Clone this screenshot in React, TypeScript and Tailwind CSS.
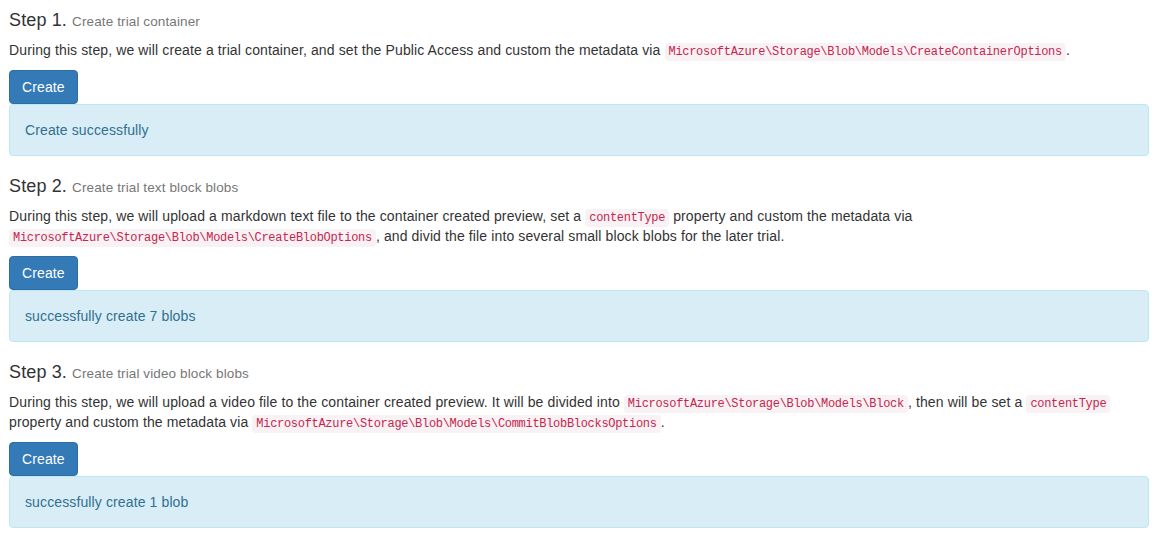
const Code = ({ children }: { children: React.ReactNode }) => (
  <code className="font-['Liberation_Mono',monospace] text-[12px] leading-none tracking-[-0.3px] text-[#c7254e] bg-[#f9f2f4] px-[4px] py-[2px] rounded-[4px]">
    {children}
  </code>
);

const Step = ({
  n,
  title,
  children,
  result,
}: {
  n: number;
  title: string;
  children: React.ReactNode;
  result: string;
}) => (
  <div>
    <h4 className="text-[18px] leading-[20px] font-normal mt-[10px] mb-[10px] text-[#333]">
      Step {n}. <small className="text-[13.5px] leading-none text-[#777]">{title}</small>
    </h4>
    <p className="mb-[10px] leading-[20px]">{children}</p>
    <button className="bg-[#337ab7] border border-[#2e6da4] text-white text-[14px] leading-[20px] px-[12px] py-[6px] rounded-[4px]">
      Create
    </button>
    <div className="bg-[#d9edf7] border border-[#bce8f1] text-[#31708f] rounded-[4px] p-[15px] mb-[20px] leading-[20px]">
      {result}
    </div>
  </div>
);

export default function App() {
  return (
    <div className="bg-white min-h-screen font-['Liberation_Sans',Arial,sans-serif] text-[14px] leading-[20px] tracking-[0.12px] text-[#333] pl-[9px] pr-[13px] pt-0">
      <Step n={1} title="Create trial container" result="Create successfully">
        During this step, we will create a trial container, and set the Public Access and custom the metadata via{' '}
        <Code>MicrosoftAzure\Storage\Blob\Models\CreateContainerOptions</Code>.
      </Step>
      <Step n={2} title="Create trial text block blobs" result="successfully create 7 blobs">
        During this step, we will upload a markdown text file to the container created preview, set a{' '}
        <Code>contentType</Code> property and custom the metadata via{' '}
        <Code>MicrosoftAzure\Storage\Blob\Models\CreateBlobOptions</Code>, and divid the file into several small block
        blobs for the later trial.
      </Step>
      <Step n={3} title="Create trial video block blobs" result="successfully create 1 blob">
        During this step, we will upload a video file to the container created preview. It will be divided into{' '}
        <Code>MicrosoftAzure\Storage\Blob\Models\Block</Code>, then will be set a <Code>contentType</Code> property
        and custom the metadata via <Code>MicrosoftAzure\Storage\Blob\Models\CommitBlobBlocksOptions</Code>.
      </Step>
    </div>
  );
}
